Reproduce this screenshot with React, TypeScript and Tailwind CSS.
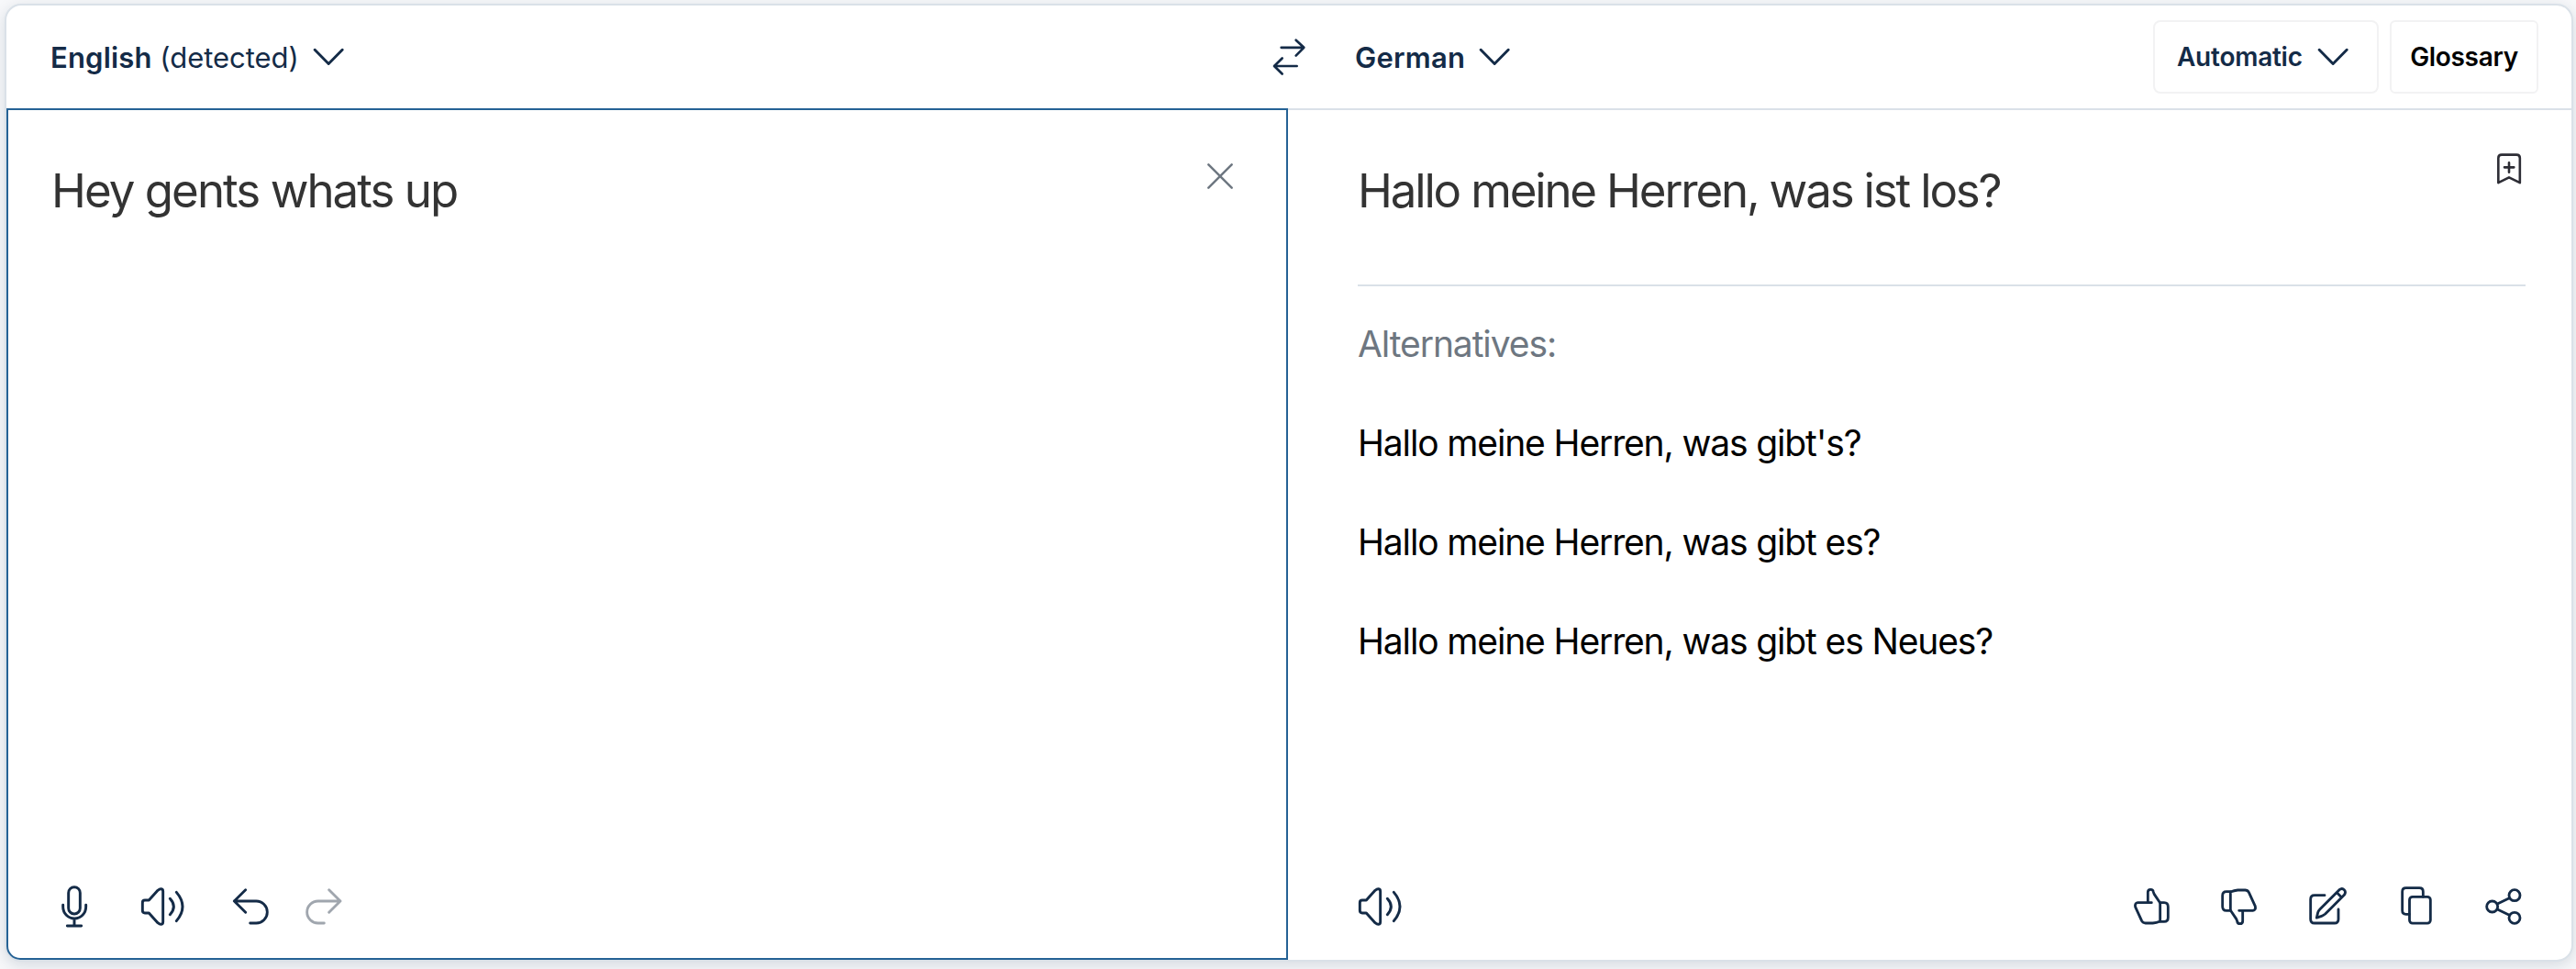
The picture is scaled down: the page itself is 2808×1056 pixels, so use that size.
import type { ReactNode } from 'react';

type IconProps = { box: string; className: string; stroke?: number; children: ReactNode };

function Icon({ box, className, stroke = 8.8, children }: IconProps) {
  return (
    <svg
      viewBox={box}
      className={`block shrink-0 ${className}`}
      fill="none"
      stroke="currentColor"
      strokeWidth={stroke}
      strokeLinecap="round"
      strokeLinejoin="round"
      aria-hidden="true"
    >
      {children}
    </svg>
  );
}

function Chevron() {
  return (
    <Icon box="0 0 102 72" className="h-6 w-[34px]" stroke={8.8}>
      <path d="M6.5 13 51.5 58.5 96.5 13" />
    </Icon>
  );
}

function Speaker({ className }: { className: string }) {
  return (
    <Icon box="459 96 147 150" className={`h-[50px] w-[49px] ${className}`}>
      <path d="M487 153H474q-8 0-8 8V187q0 8 8 8H487L516 227q6 5 10 5q7 0 7-8V124q0-8-7-8q-4 0-10 5Z" />
      <path d="M556 148Q580 174 556 200M577 127Q617 174 577 221" />
    </Icon>
  );
}

const thumb = (
  <>
    <path d="M136 161H91q-11 2-8 14L104 221q4 7 12 7H140q12-1 24-6V162L145 134q-2-4-3-8q-1-8-9-8q-9 0-9 9V161" />
    <path d="M164 161H177q13 0 13 14V210q0 13-13 13H164" />
  </>
);

const alternatives = [
  { text: "Hallo meine Herren, was gibt's?" },
  { text: 'Hallo meine Herren, was gibt es?' },
  { text: 'Hallo meine Herren, was gibt es Neues?' },
];

function Header() {
  return (
    <header className="flex h-[114px] shrink-0 items-center border-b-2 border-[#dae1e8] pr-9 text-[#142b47]">
      <div className="flex w-[1379px] items-center pl-12">
        <button className="flex items-center text-[31px] leading-[40px] tracking-[0.18px]">
          <span className="w-[286px] whitespace-nowrap pt-0.5 text-left">
            <span className="font-semibold">English</span>
            <span className="tracking-[-0.04px]"> (detected)</span>
          </span>
          <Chevron />
        </button>
      </div>
      <button>
        <Icon box="438 123 120 126" className="h-[42px] w-10" stroke={8}>
          <path d="M470 155.500H544M518 131 544 155.500 518 182M521 216H448M473 190.500 447 216 473 241.500" />
        </Icon>
      </button>
      <button className="ml-[51px] flex items-center text-[31px] leading-[40px] font-semibold tracking-[0.22px]">
        <span className="w-[135px] pt-0.5 text-left">German</span>
        <Chevron />
      </button>
      <div className="ml-auto flex gap-3 text-[28px] font-semibold tracking-[-0.31px]">
        <button className="flex h-20 w-[246px] items-center rounded-lg border-2 border-[#f2f2f3] pl-6">
          <span className="w-[153px] text-left tracking-[-0.25px]">Automatic</span>
          <Chevron />
        </button>
        <button className="flex h-20 w-[162px] items-center justify-center rounded-md border-2 border-[#f2f2f3] text-black">
          Glossary
        </button>
      </div>
    </header>
  );
}

function SourcePane() {
  return (
    <section className="-mt-0.5 flex w-[1397px] shrink-0 flex-col rounded-bl-[15px] border-2 border-[#256295] bg-white pb-8">
      <div className="flex flex-1 items-start justify-between pl-[47px]">
        <p className="mt-14 text-[51px] leading-[64px] tracking-[-1.96px] text-[#333333]">Hey gents whats up</p>
        <button className="mt-[58px] mr-[58px] text-[#6e7781]">
          <Icon box="228 534 84 84" className="size-7" stroke={7.5}>
            <path d="M232 538 308 614M308 538 232 614" />
          </Icon>
        </button>
      </div>
      <div className="flex pl-[57px] text-[#142b47]">
        <Icon box="198 96 93 150" className="h-[50px] w-[31px]">
          <rect x="224" y="110" width="38" height="88" rx="19" />
          <path d="M206 169V175a37.500 38 0 0 0 75 0V169M243 213V236M220 237H266" />
        </Icon>
        <Speaker className="ml-14" />
        <Icon box="759 96 123 150" className="ml-[51px] h-[50px] w-[41px]" stroke={8.5}>
          <path d="M803 119 766 156 803 193M766 156H838a36 36 0 0 1 0 72H818" />
        </Icon>
        <Icon box="996 96 123 150" className="ml-[38px] h-[50px] w-[41px] text-[#a0a6ae]" stroke={8.5}>
          <path d="M1076 119 1113 156 1076 193M1113 156H1040a36 36 0 0 0 0 72H1060" />
        </Icon>
      </div>
    </section>
  );
}

function TargetPane() {
  return (
    <section className="flex flex-1 flex-col pr-[50px] pb-[34px] pl-[76px]">
      <div className="flex h-[192px] shrink-0 items-start justify-between border-b-2 border-[#dae1e8]">
        <p className="mt-14 text-[51px] leading-[64px] tracking-[-2.17px] text-[#333333]">
          Hallo meine Herren, was ist los?
        </p>
        <Icon box="1200 495 96 111" className="mt-[45px] mr-px h-[37px] w-8 text-[#2d2d35]" stroke={7.8}>
          <path d="M1210 597.500V517q0-11 11-11H1269.500q11 0 11 11V597.500L1245 580Z" />
          <path d="M1230 547H1261M1245 532V563" />
        </Icon>
      </div>
      <p className="mt-[38px] text-[39px] leading-[50px] tracking-[-1.09px] text-[#6e7781]">Alternatives:</p>
      <ul className="mt-[58px] flex flex-col gap-[58px] text-[39px] leading-[50px] tracking-[-1.14px] text-black">
        {alternatives.map((a) => (
          <li key={a.text}>{a.text}</li>
        ))}
      </ul>
      <div className="mt-auto flex text-[#142b47]">
        <Speaker className="mr-auto" />
        <Icon box="75 96 123 150" className="h-[50px] w-[41px]" stroke={8.5}>
          {thumb}
        </Icon>
        <Icon box="360 96 123 150" className="ml-[54px] h-[50px] w-[41px]" stroke={8.5}>
          <g transform="rotate(180 279 174)">{thumb}</g>
        </Icon>
        <Icon box="648 96 129 150" className="ml-[55px] h-[50px] w-[43px]" stroke={8.5}>
          <path d="M702 137H669q-13 0-13 13V215q0 13 13 13H734q13 0 13-13V183" />
          <path d="M676 210.500 680 193Q682 187 687 182L750 119q9-7 16 0t0 17L704 198Q698 203 692 205ZM742 128 757 143" />
        </Icon>
        <Icon box="948 96 108 150" className="ml-[57px] h-[50px] w-9" stroke={8.5}>
          <rect x="979.500" y="142" width="68.500" height="86.500" rx="10" />
          <path d="M1024 142V125q0-12-12-12H968q-12 0-12 12V187q0 12 12 12H979" />
        </Icon>
        <Icon box="1224 96 126 150" className="ml-14 mr-[3px] h-[50px] w-[42px]" stroke={8.5}>
          <circle cx="1250" cy="174" r="18" />
          <circle cx="1323" cy="137" r="18" />
          <circle cx="1323" cy="211" r="18" />
          <path d="M1267 165 1306 146M1267 183 1306 202" />
        </Icon>
      </div>
    </section>
  );
}

export default function App() {
  return (
    <main className="h-[1056px] w-[2808px] overflow-hidden bg-[#f7f8fa] pt-1 pl-[5px] font-['Inter',sans-serif]">
      <div className="flex h-[1044px] w-[2800px] flex-col rounded-[18px] border-2 border-[#dae1e8] bg-white shadow-[0_4px_16px_rgba(15,43,70,0.14)]">
        <Header />
        <div className="flex min-h-0 flex-1">
          <SourcePane />
          <TargetPane />
        </div>
      </div>
    </main>
  );
}
